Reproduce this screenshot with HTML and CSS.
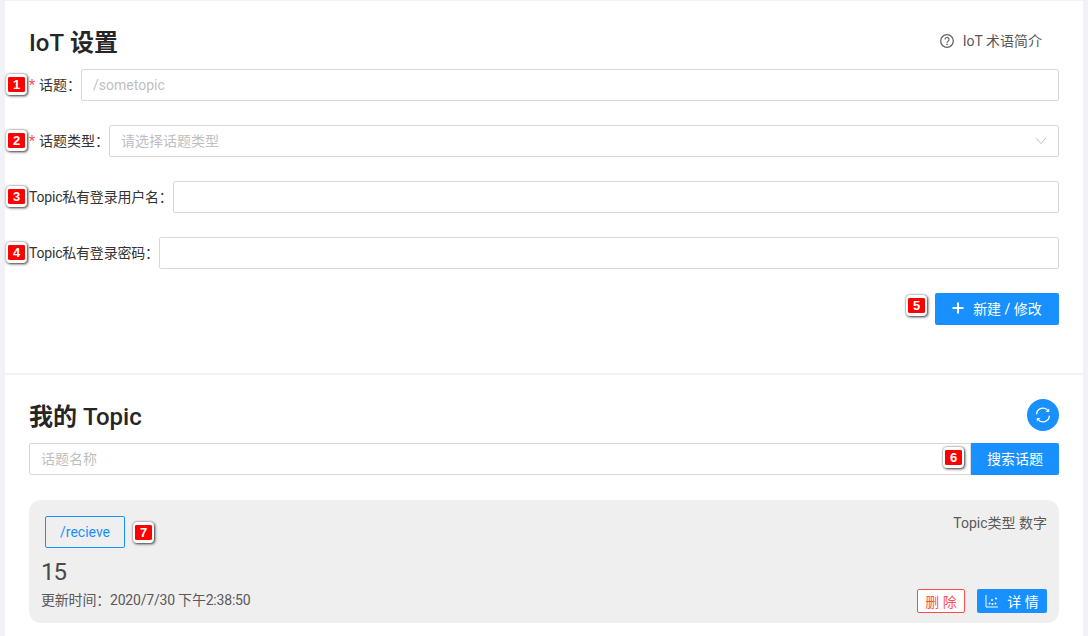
FILE: index.html
```html
<!DOCTYPE html>
<html lang="en">
<head>
    <meta charset="UTF-8">
    <meta name="viewport" content="width=device-width, initial-scale=1.0">
    <title>IoT 设置</title>
    <link rel="stylesheet" href="styles.css">
</head>
<body>
    <section class="panel panel-settings">
        <div class="panel-head">
            <h1><span class="latin">IoT</span> 设置</h1>
            <a class="help-link" href="#">
                <svg class="help-icon" viewBox="0 0 14 14" width="14" height="14">
                    <circle cx="7" cy="7" r="6.3" fill="none" stroke="#666" stroke-width="1.3"/>
                    <path d="M5 5.5a2 2 0 1 1 3 1.7c-.7.4-1 .7-1 1.5" fill="none" stroke="#666" stroke-width="1.2"/>
                    <circle cx="7" cy="10.4" r=".8" fill="#666"/>
                </svg>
                IoT 术语简介
            </a>
        </div>

        <form class="topic-form">
            <div class="form-row">
                <label for="topic"><span class="required">*</span>话题：</label>
                <input type="text" id="topic" placeholder="/sometopic">
                <span class="badge badge-form">1</span>
            </div>
            <div class="form-row">
                <label><span class="required">*</span>话题类型：</label>
                <div class="select">
                    <span>请选择话题类型</span>
                    <svg viewBox="0 0 12 8" width="12" height="8"><path d="M1 1l5 5.6L11 1" fill="none" stroke="#bfbfbf" stroke-width="1"/></svg>
                </div>
                <span class="badge badge-form">2</span>
            </div>
            <div class="form-row">
                <label class="label-long" for="user">Topic私有登录用户名：</label>
                <input type="text" id="user">
                <span class="badge badge-form">3</span>
            </div>
            <div class="form-row">
                <label class="label-long" for="pass">Topic私有登录密码：</label>
                <input type="text" id="pass">
                <span class="badge badge-form">4</span>
            </div>
            <div class="form-actions">
                <span class="badge-inline badge">5</span>
                <button type="button" class="btn btn-primary btn-create">
                    <svg viewBox="0 0 12 12" width="12" height="12"><path d="M6 .5v11M.5 6h11" stroke="#fff" stroke-width="2"/></svg>
                    新建 / 修改
                </button>
            </div>
        </form>
    </section>

    <section class="panel panel-topics">
        <div class="panel-head topics-head">
            <h1>我的 <span class="latin">Topic</span></h1>
            <button type="button" class="btn-round">
                <svg viewBox="0 0 16 16" width="16" height="16">
                    <path d="M1.6 7.2A6.4 6.4 0 0 1 13 3.6" fill="none" stroke="#fff" stroke-width="1.3"/>
                    <path d="M14.4 8.8A6.4 6.4 0 0 1 3 12.4" fill="none" stroke="#fff" stroke-width="1.3"/>
                    <path d="M14.2 1.6v3.5h-3.5zM1.8 14.4v-3.5h3.5z" fill="#fff"/>
                </svg>
            </button>
        </div>

        <div class="search">
            <input type="text" placeholder="话题名称">
            <span class="badge badge-search">6</span>
            <button type="button" class="btn btn-primary btn-search">搜索话题</button>
        </div>

        <div class="topic-card">
            <div class="card-top">
                <div class="tag-wrap">
                    <button type="button" class="btn-tag">/recieve</button>
                    <span class="badge">7</span>
                </div>
                <span class="topic-type">Topic类型 数字</span>
            </div>
            <div class="card-bottom">
                <div class="card-info">
                    <div class="topic-value">15</div>
                    <div class="topic-time">更新时间：2020/7/30 下午2:38:50</div>
                </div>
                <div class="card-actions">
                    <button type="button" class="btn-small btn-delete">删 除</button>
                    <button type="button" class="btn-small btn-detail">
                        <svg viewBox="0 0 14 14" width="14" height="14">
                            <path d="M1 1v12h12" fill="none" stroke="#fff" stroke-width="1"/>
                            <circle cx="4.5" cy="9.5" r="1" fill="#fff"/>
                            <circle cx="7.5" cy="10" r="1" fill="#fff"/>
                            <circle cx="7" cy="6" r="1" fill="#fff"/>
                            <circle cx="11" cy="4.5" r="1" fill="#fff"/>
                            <circle cx="10.5" cy="9.5" r="1" fill="#fff"/>
                        </svg>
                        详 情
                    </button>
                </div>
            </div>
        </div>
    </section>
</body>
</html>
```

FILE: styles.css
```css
* {
    box-sizing: border-box;
}
html, body {
    height: 636px;
    overflow: hidden;
}
body {
    margin: 0;
    padding: 1px 5px 0;
    background-color: #f0f2f5;
    font-family: Roboto, "Noto Sans CJK SC", sans-serif;
    font-size: 14px;
    color: #333;
}
.panel {
    background-color: #ffffff;
    padding: 24px;
}
.panel-settings {
    height: 372px;
    margin-bottom: 2px;
}
.panel-topics {
    height: 261px;
}
.panel-head {
    display: flex;
    justify-content: space-between;
    align-items: flex-start;
    height: 44px;
}
.topics-head {
    height: 32px;
    margin-bottom: 12px;
}
h1 {
    margin: 0;
    font-size: 24px;
    font-weight: 600;
    line-height: 36px;
    color: #262626;
}
.latin {
    font-weight: 500;
}
.help-link {
    display: flex;
    align-items: center;
    gap: 9px;
    padding-right: 17px;
    font-size: 14px;
    line-height: 32px;
    color: #595959;
    text-decoration: none;
}
.form-row {
    position: relative;
    display: flex;
    align-items: center;
    height: 32px;
    margin-bottom: 24px;
}
.form-row label {
    flex: none;
    font-size: 14px;
    line-height: 32px;
    color: #333;
    white-space: nowrap;
}
.form-row .label-long {
    letter-spacing: -0.2px;
}
.required {
    color: #ff4d4f;
    margin-right: 4px;
}
input[type="text"], .select {
    flex: 1;
    height: 32px;
    min-width: 0;
    padding: 0 11px;
    border: 1px solid #d9d9d9;
    border-radius: 2px;
    font-family: inherit;
    font-size: 14px;
    outline: none;
}
input::placeholder, .select span {
    color: #bfbfbf;
}
.select {
    display: flex;
    justify-content: space-between;
    align-items: center;
}
.select span {
    padding-bottom: 2px;
}
.form-actions {
    display: flex;
    justify-content: flex-end;
    align-items: flex-start;
}
.btn {
    border: none;
    border-radius: 2px;
    padding: 0 0 2px;
    font-family: inherit;
    font-size: 14px;
    cursor: pointer;
}
.btn-primary {
    background-color: #1890ff;
    color: #ffffff;
}
.btn-create {
    display: flex;
    align-items: center;
    justify-content: center;
    gap: 9px;
    width: 124px;
    height: 32px;
}
.badge {
    display: flex;
    align-items: center;
    justify-content: center;
    width: 21px;
    height: 21px;
    border-style: solid;
    border-color: #ffffff;
    border-width: 3px 2px;
    border-radius: 4px;
    background-color: #ff0000;
    box-shadow: 0 0 2px rgba(0, 0, 0, 0.5), 1px 1px 3px rgba(0, 0, 0, 0.7);
    color: #ffffff;
    font-family: "Liberation Sans", sans-serif;
    font-size: 13px;
    font-weight: 700;
    line-height: 1;
}
.badge-form {
    position: absolute;
    left: -23px;
    top: 5px;
}
.badge-inline {
    margin: 2px 8px 0 0;
}
.search {
    position: relative;
    display: flex;
    height: 32px;
    margin-bottom: 25px;
}
.search input[type="text"] {
    border-radius: 2px 0 0 2px;
}
.badge-search {
    position: absolute;
    right: 95px;
    top: 4px;
}
.btn-search {
    flex: none;
    width: 88px;
    border-radius: 0 2px 2px 0;
}
.btn-round {
    display: flex;
    align-items: center;
    justify-content: center;
    width: 32px;
    height: 32px;
    padding: 0;
    border: none;
    border-radius: 50%;
    background-color: #1890ff;
}
.topic-card {
    display: flex;
    flex-direction: column;
    height: 123px;
    padding: 16px 12px 10px 12px;
    border-radius: 12px;
    background-color: #efefef;
}
.card-top {
    display: flex;
    justify-content: space-between;
    align-items: flex-start;
}
.tag-wrap {
    display: flex;
    align-items: center;
    gap: 8px;
    margin-left: 4px;
}
.btn-tag {
    width: 80px;
    height: 32px;
    border: 1px solid #1890ff;
    border-radius: 2px;
    background: transparent;
    color: #1890ff;
    font-family: inherit;
    font-size: 14px;
}
.topic-type {
    font-size: 14px;
    line-height: 14px;
    color: #595959;
}
.card-bottom {
    flex: 1;
    display: flex;
    justify-content: space-between;
    align-items: flex-end;
}
.card-info {
    padding-bottom: 3px;
}
.topic-value {
    margin-top: 8px;
    font-size: 24px;
    letter-spacing: -1px;
    line-height: 32px;
    color: #4a4a4a;
}
.topic-time {
    margin-top: 2px;
    font-size: 14px;
    letter-spacing: -0.2px;
    line-height: 20px;
    color: #595959;
}
.card-actions {
    display: flex;
    gap: 12px;
}
.btn-small {
    display: flex;
    align-items: center;
    justify-content: center;
    height: 24px;
    padding: 0 0 1px;
    border-radius: 2px;
    font-family: inherit;
    font-size: 14px;
}
.btn-delete {
    width: 48px;
    border: 1px solid #ff4d4f;
    background-color: #ffffff;
    color: #ff4d4f;
}
.btn-detail {
    gap: 8px;
    width: 70px;
    border: none;
    background-color: #1890ff;
    color: #ffffff;
}
```
